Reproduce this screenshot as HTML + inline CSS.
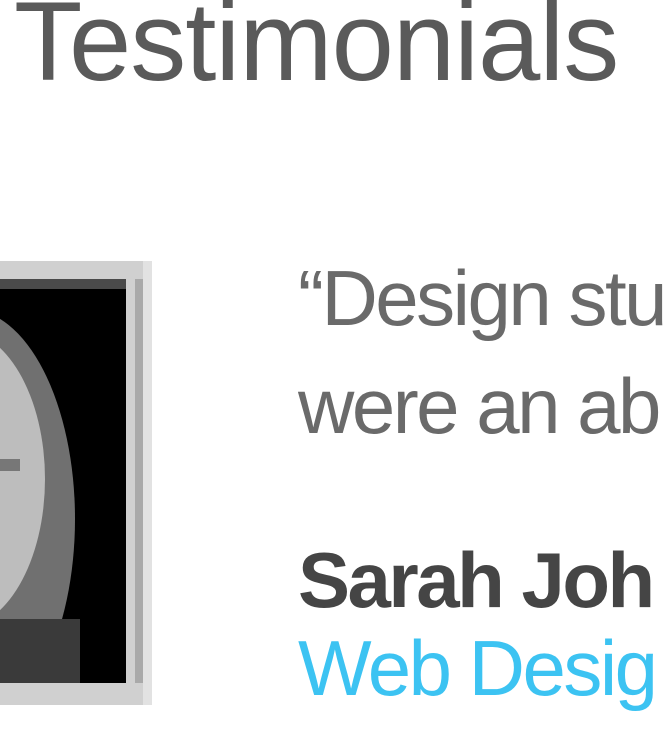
<!DOCTYPE html>
<html><head><meta charset="utf-8"><style>
html,body{margin:0;width:663px;height:729px;overflow:hidden;background:#fff;position:relative;font-family:"Liberation Sans",sans-serif}
.t{position:absolute;left:14px;top:-14px;font-size:112px;color:#5a5a5a;line-height:1;letter-spacing:-1px}
.q{position:absolute;left:298px;width:365px;overflow:hidden;font-size:78px;color:#6a6a6a;white-space:nowrap;line-height:1.3;letter-spacing:-2.5px}
.frame{position:absolute;left:-20px;top:261px;width:172px;height:444px;background:#d0d0d0}
.frame .edge{position:absolute;right:0;top:0;width:9px;height:100%;background:#e2e2e2}
.frame .edge2{position:absolute;right:9px;top:18px;width:8px;height:404px;background:#a9a9a9}
.photo{position:absolute;left:0;top:18px;width:146px;height:404px;background:#000;overflow:hidden}
</style></head><body>
<div class="t">Testimonials</div>
<div class="frame"><div class="edge"></div><div class="edge2"></div>
<div class="photo">
<div style="position:absolute;left:0;top:0;width:100%;height:10px;background:#4a4a4a"></div>
<div style="position:absolute;left:-120px;top:30px;width:215px;height:420px;border-radius:50%;background:#707070"></div>
<div style="position:absolute;left:-110px;top:50px;width:175px;height:300px;border-radius:50%;background:#bdbdbd"></div>
<div style="position:absolute;left:-20px;top:180px;width:60px;height:12px;background:#777"></div>
<div style="position:absolute;left:-30px;top:340px;width:130px;height:70px;background:#3a3a3a"></div>
</div></div>
<div class="q" style="top:248px">“Design stu</div>
<div class="q" style="top:356px">were an ab</div>
<div class="q" style="top:530px;font-weight:bold;color:#454545">Sarah Joh</div>
<div class="q" style="top:618px;color:#3cc3f2">Web Desig</div>
</body></html>
